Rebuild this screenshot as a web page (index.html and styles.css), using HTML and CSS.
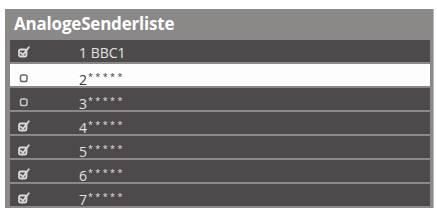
FILE: index.html
```html
<!DOCTYPE html>
<html lang="de">
<head>
    <meta charset="UTF-8">
    <title>AnalogeSenderliste</title>
    <link rel="stylesheet" href="styles.css">
</head>
<body>
    <div class="panel">
        <div class="title">AnalogeSenderliste</div>
        <div class="list">
            <div class="row">
                <svg class="box on" viewBox="0 0 12 12"><rect x="1" y="3.5" width="7.5" height="7" rx="1.5"/><path d="M2.8 6.6 L5 8.9 L10.8 1.2"/></svg>
                <span class="name">1 BBC1</span>
            </div>
            <div class="row selected">
                <svg class="box off" viewBox="0 0 12 12"><rect x="2.5" y="3" width="6.5" height="6.5" rx="1.8"/></svg>
                <span class="name">2<sup>*****</sup></span>
            </div>
            <div class="row">
                <svg class="box off" viewBox="0 0 12 12"><rect x="2.5" y="3" width="6.5" height="6.5" rx="1.8"/></svg>
                <span class="name">3<sup>*****</sup></span>
            </div>
            <div class="row">
                <svg class="box on" viewBox="0 0 12 12"><rect x="1" y="3.5" width="7.5" height="7" rx="1.5"/><path d="M2.8 6.6 L5 8.9 L10.8 1.2"/></svg>
                <span class="name">4<sup>*****</sup></span>
            </div>
            <div class="row">
                <svg class="box on" viewBox="0 0 12 12"><rect x="1" y="3.5" width="7.5" height="7" rx="1.5"/><path d="M2.8 6.6 L5 8.9 L10.8 1.2"/></svg>
                <span class="name">5<sup>*****</sup></span>
            </div>
            <div class="row">
                <svg class="box on" viewBox="0 0 12 12"><rect x="1" y="3.5" width="7.5" height="7" rx="1.5"/><path d="M2.8 6.6 L5 8.9 L10.8 1.2"/></svg>
                <span class="name">6<sup>*****</sup></span>
            </div>
            <div class="row">
                <svg class="box on" viewBox="0 0 12 12"><rect x="1" y="3.5" width="7.5" height="7" rx="1.5"/><path d="M2.8 6.6 L5 8.9 L10.8 1.2"/></svg>
                <span class="name">7<sup>*****</sup></span>
            </div>
        </div>
    </div>
</body>
</html>
```

FILE: styles.css
```css
body {
    margin: 0;
    padding: 0;
    background-color: white;
    font-family: 'Open Sans', sans-serif;
}
.panel {
    margin: 9px 0 0 5px;
    width: 429px;
    padding-bottom: 2px;
    background-color: #8b8888;
    border-right: 1px solid #b9b7b7;
    box-sizing: border-box;
}
.title {
    height: 31px;
    padding-left: 9px;
    color: white;
    font-weight: 700;
    font-size: 17px;
    letter-spacing: -0.2px;
    line-height: 30px;
}
.list {
    display: flex;
    flex-direction: column;
    gap: 2px;
    margin: 0 3px 0 5px;
}
.row {
    height: 22px;
    display: grid;
    grid-template-columns: 61px 1fr;
    align-items: center;
    padding-left: 8px;
    background-color: #4e4a4b;
    color: #e4e2e2;
    font-size: 14px;
}
.row.selected {
    background-color: #fdfdfd;
    color: #3c3a3a;
}
.box {
    width: 12px;
    height: 12px;
    fill: none;
    stroke-linecap: round;
    stroke-linejoin: round;
}
.box.on {
    stroke: #dcdada;
    stroke-width: 1.8;
}
.box.off {
    stroke: #c9c7c7;
    stroke-width: 1.5;
}
.selected .box.off {
    stroke: #6a6767;
}
.name {
    line-height: 22px;
    padding-top: 2px;
    white-space: nowrap;
}
.name sup {
    font-size: 9px;
    letter-spacing: 2.4px;
    vertical-align: 5px;
    margin-left: 1px;
}
```
